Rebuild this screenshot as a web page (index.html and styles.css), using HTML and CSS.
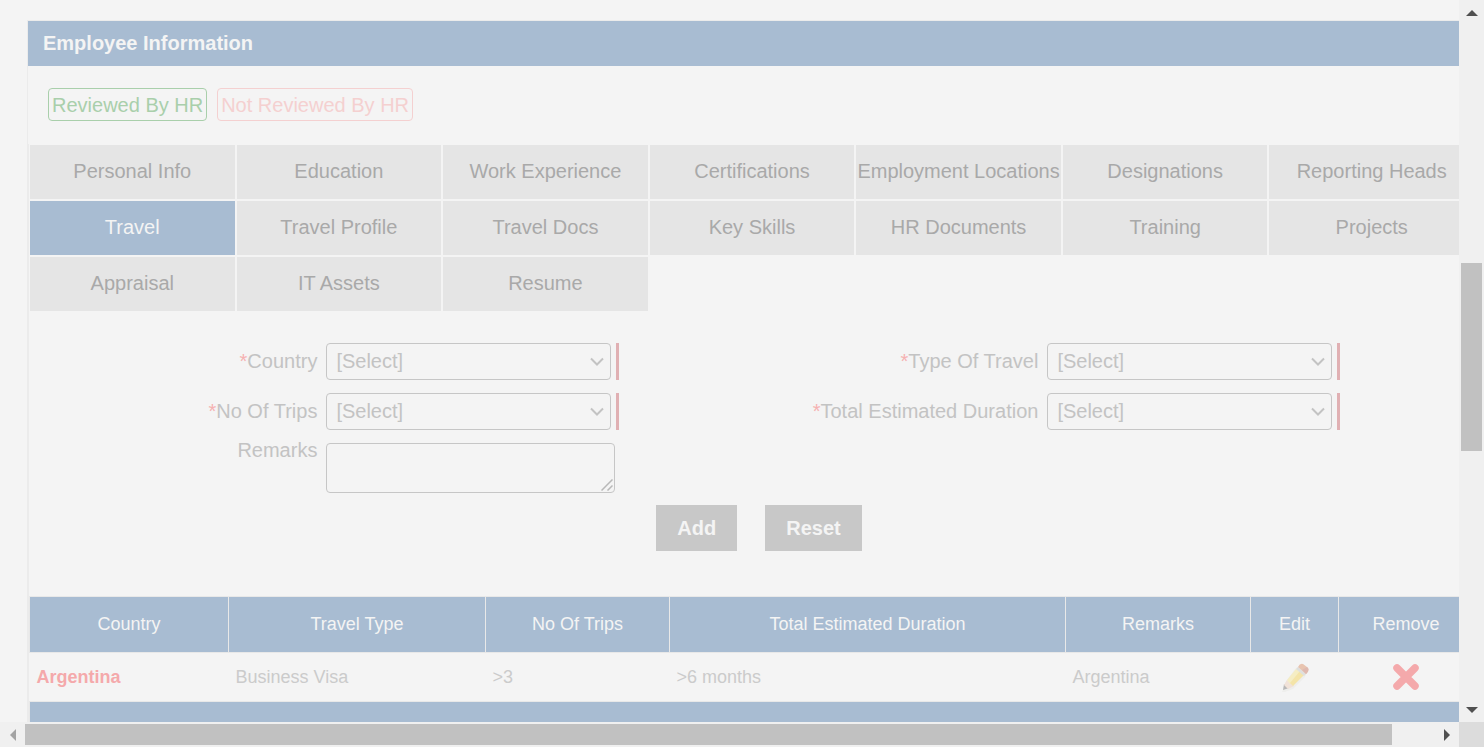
FILE: index.html
```html
<!DOCTYPE html>
<html lang="en">
<head>
<meta charset="utf-8">
<title>Employee Information</title>
<link rel="stylesheet" href="styles.css">
</head>
<body>
<div class="window">
  <main class="pane">
    <section class="panel">
      <h1 class="panel-title">Employee Information</h1>
      <div class="tags">
        <span class="tag tag-ok">Reviewed By HR</span>
        <span class="tag tag-no">Not Reviewed By HR</span>
      </div>
      <div class="panel-body">
        <nav class="tabs">
          <button class="tab" type="button">Personal Info</button>
          <button class="tab" type="button">Education</button>
          <button class="tab" type="button">Work Experience</button>
          <button class="tab" type="button">Certifications</button>
          <button class="tab" type="button">Employment Locations</button>
          <button class="tab" type="button">Designations</button>
          <button class="tab" type="button">Reporting Heads</button>
          <button class="tab tab-active" type="button">Travel</button>
          <button class="tab" type="button">Travel Profile</button>
          <button class="tab" type="button">Travel Docs</button>
          <button class="tab" type="button">Key Skills</button>
          <button class="tab" type="button">HR Documents</button>
          <button class="tab" type="button">Training</button>
          <button class="tab" type="button">Projects</button>
          <button class="tab" type="button">Appraisal</button>
          <button class="tab" type="button">IT Assets</button>
          <button class="tab" type="button">Resume</button>
        </nav>
        <form class="form">
          <div class="fields">
            <div class="field">
              <label class="label" for="country"><span class="star">*</span>Country</label>
              <div class="control required"><select class="select" id="country"><option>[Select]</option></select><svg class="chevron" viewBox="0 0 14 9"><path d="M1 1.5l6 6 6-6"/></svg></div>
            </div>
            <div class="field">
              <label class="label" for="type"><span class="star">*</span>Type Of Travel</label>
              <div class="control required"><select class="select" id="type"><option>[Select]</option></select><svg class="chevron" viewBox="0 0 14 9"><path d="M1 1.5l6 6 6-6"/></svg></div>
            </div>
            <div class="field">
              <label class="label" for="trips"><span class="star">*</span>No Of Trips</label>
              <div class="control required"><select class="select" id="trips"><option>[Select]</option></select><svg class="chevron" viewBox="0 0 14 9"><path d="M1 1.5l6 6 6-6"/></svg></div>
            </div>
            <div class="field">
              <label class="label" for="duration"><span class="star">*</span>Total Estimated Duration</label>
              <div class="control required"><select class="select" id="duration"><option>[Select]</option></select><svg class="chevron" viewBox="0 0 14 9"><path d="M1 1.5l6 6 6-6"/></svg></div>
            </div>
            <div class="field field-top">
              <label class="label" for="remarks">Remarks</label>
              <div class="control"><textarea class="textarea" id="remarks"></textarea><svg class="grip" viewBox="0 0 12 12"><path d="M0.500 11.500L11.500 0.500M6.500 11.500L11.500 6.500"/></svg></div>
            </div>
          </div>
          <div class="actions">
            <button class="action" type="button">Add</button>
            <button class="action" type="reset">Reset</button>
          </div>
        </form>
        <table class="table">
          <colgroup><col class="c-country"><col class="c-type"><col class="c-trips"><col class="c-duration"><col class="c-remarks"><col class="c-edit"><col></colgroup>
          <thead>
            <tr><th>Country</th><th>Travel Type</th><th>No Of Trips</th><th>Total Estimated Duration</th><th>Remarks</th><th>Edit</th><th>Remove</th></tr>
          </thead>
          <tbody>
            <tr>
              <td><a class="link" href="#">Argentina</a></td>
              <td>Business Visa</td><td>&gt;3</td><td>&gt;6 months</td><td>Argentina</td>
              <td class="icon-cell"><button class="icon-button" type="button" aria-label="Edit"><svg class="icon" viewBox="0 0 32 32">
                <path fill="#eeeeec" d="M3 31l4-11L17 7l7-4 5 5-3 8-12 12-8 3z"/>
                <path fill="#b8b8b8" d="M4 29l1-6 5 4z"/>
                <path fill="#f1e2d8" d="M5 24l3-5 7 6-6 3z"/>
                <path fill="#f5edc4" d="M8 19L17 8l5 3-11 12z"/>
                <path fill="#f4e4a8" d="M11 22L21 10l4 4-11 11z"/>
                <path fill="#dfdfdd" d="M17 8l2-2 8 7-2 2z"/>
                <path fill="#e8c4b0" d="M19 6q2-4 5-3l4 3q3 2 0 6l-1 1z"/>
                <path fill="#dfb9b0" d="M23 9l5-3q3 2 0 6l-1 1z"/>
              </svg></button></td>
              <td class="icon-cell"><button class="icon-button" type="button" aria-label="Remove"><svg class="icon" viewBox="0 0 32 32"><path d="M7 7l18 18M25 7L7 25" fill="none" stroke="#f4a9ab" stroke-width="7.500" stroke-linecap="round"/></svg></button></td>
            </tr>
          </tbody>
          <tfoot><tr><td colspan="7"></td></tr></tfoot>
        </table>
      </div>
    </section>
  </main>
  <div class="scroll scroll-y">
    <button class="scroll-arrow" type="button" aria-label="Scroll up"><svg class="arrow" viewBox="0 0 12 12"><path d="M0 9l6-6 6 6z"/></svg></button>
    <div class="track"><div class="thumb"></div></div>
    <button class="scroll-arrow" type="button" aria-label="Scroll down"><svg class="arrow" viewBox="0 0 12 12"><path d="M0 3l6 6 6-6z"/></svg></button>
  </div>
  <div class="scroll scroll-x">
    <button class="scroll-arrow" type="button" aria-label="Scroll left"><svg class="arrow arrow-dim" viewBox="0 0 12 12"><path d="M9 0L3 6l6 6z"/></svg></button>
    <div class="track"><div class="thumb"></div></div>
    <button class="scroll-arrow" type="button" aria-label="Scroll right"><svg class="arrow" viewBox="0 0 12 12"><path d="M3 0l6 6-6 6z"/></svg></button>
  </div>
  <div class="corner"></div>
</div>
</body>
</html>
```
FILE: styles.css
```css
* { box-sizing: border-box; }
body { margin: 0; background: #f4f4f4; color: #c3c3c3; font: 20px/24px "Liberation Sans", Arial, sans-serif; }
button, select, textarea { font: inherit; color: inherit; border-radius: 0; }
button { border: 0; padding: 0; background: none; }

.window { display: grid; grid-template: minmax(0, 1fr) 25px / minmax(0, 1fr) 25px; height: 100vh; }
.pane { overflow: hidden; padding: 20px 0 0 27px; }
.panel { margin-right: -16px; border: 1px solid #ebebeb; border-bottom: 0; }
.panel-title { margin: 0; padding: 10px 15px 11px; background: #a8bcd2; color: #f4f4f4; font-size: 20px; line-height: 24px; }
.tags { display: flex; gap: 10px; padding: 22px 20px 23px; }
.tag { border: 1px solid; border-radius: 4px; padding: 4px 3px 3px; }
.tag-ok { color: #a9cfab; }
.tag-no { color: #f4d0d0; }
.panel-body { border-left: 1px solid #ebebeb; padding-top: 1px; }

.tabs { display: grid; grid-template-columns: repeat(7, minmax(0, 1fr)); gap: 2px; padding-left: 1px; }
.tab { height: 54px; padding-bottom: 2px; background: #e5e5e5; color: #a9a9a9; white-space: nowrap; }
.tab-active { background: #a8bcd2; color: #f4f4f4; }

.form { padding: 32px 0 45px; }
.fields { display: grid; grid-template-columns: 1fr 1fr; row-gap: 13px; padding-right: 3px; }
.field { display: flex; gap: 9px; align-items: center; }
.field-top { align-items: flex-start; }
.label { width: 40%; padding-bottom: 2px; text-align: right; }
.field-top .label { margin-top: -5px; }
.star { color: #f6b1b1; }
.control { position: relative; display: flex; width: 40%; }
.required { border-right: 3px solid #e0b0b3; width: 293px; padding-right: 5px; }
.control .select { appearance: none; width: 100%; height: 37px; border: 1px solid #c6c6c6; border-radius: 4px; padding: 0 9px 2px; background: transparent; }
.chevron { position: absolute; right: 12px; top: 14px; width: 14px; height: 9px; fill: none; stroke: #c3c3c3; stroke-width: 2; pointer-events: none; }
.textarea { width: 100%; height: 50px; border: 1px solid #c6c6c6; border-radius: 4px; background: transparent; resize: none; }
.grip { position: absolute; right: 2px; bottom: 2px; width: 12px; height: 12px; stroke: #b8b8b8; stroke-width: 1.5; pointer-events: none; }
.actions { display: flex; justify-content: center; gap: 28px; padding: 12px 0 0 15px; }
.action { height: 46px; padding: 0 21px; background: #c8c8c8; color: #f4f4f4; font-weight: bold; }

.table { width: 100%; border-collapse: collapse; table-layout: fixed; font-size: 18px; color: #cbcbcb; }
.table th { height: 56px; padding: 0 0 1px; border: 1px solid #e8e8e8; background: #a8bcd2; color: #f4f4f4; font-weight: normal; }
.table td { height: 49px; padding: 0 7px; }
.table tfoot td { background: #a8bcd2; border-top: 1px solid #e8e8e8; border-left: 1px solid #e8e8e8; }
.c-country { width: 199px; }
.c-type { width: 257px; }
.c-trips { width: 184px; }
.c-duration { width: 396px; }
.c-remarks { width: 185px; }
.c-edit { width: 88px; }
.link { color: #f4a9ab; font-weight: bold; text-decoration: none; }
.table .icon-cell { padding: 0; text-align: center; }
.icon-button { vertical-align: middle; }
.icon { display: block; width: 32px; height: 32px; }

.scroll { display: flex; background: #f0f0f0; }
.scroll-y { flex-direction: column; padding: 0 2px; }
.scroll-x { padding: 2px 0; }
.scroll-arrow { display: flex; flex: 0 0 25px; align-items: center; justify-content: center; }
.arrow { width: 12px; height: 12px; fill: #505050; }
.arrow-dim { fill: #a3a3a3; }
.track { display: flex; flex: 1; }
.thumb { background: #c1c1c1; }
.scroll-y .track { flex-direction: column; }
.scroll-y .thumb { margin-top: 238px; height: 28%; }
.scroll-x .thumb { width: 97%; }
.corner { background: #dcdcdc; }
```
